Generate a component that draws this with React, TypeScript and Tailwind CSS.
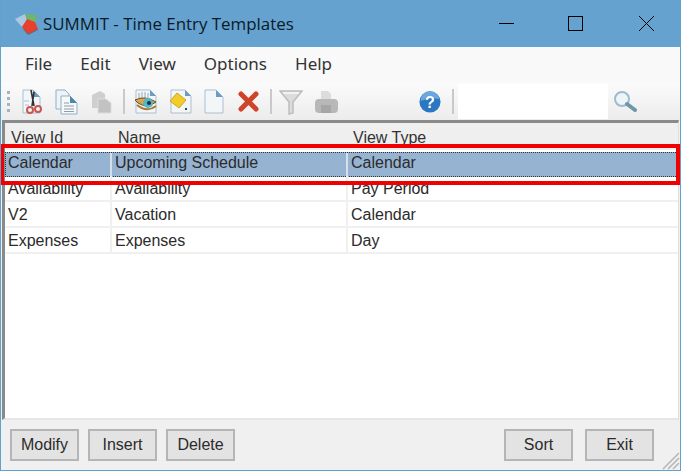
const font = "font-['Liberation_Sans',sans-serif]";

const rows = [
  { id: "Calendar", name: "Upcoming Schedule", type: "Calendar", selected: true },
  { id: "Availability", name: "Availability", type: "Pay Period" },
  { id: "V2", name: "Vacation", type: "Calendar" },
  { id: "Expenses", name: "Expenses", type: "Day" },
];

function Logo() {
  return (
    <svg width="24" height="24" viewBox="0 0 24 24" className="blur-[0.4px]">
      <path d="M9 17 L14 23 L24 18 L22 14 Z" fill="#4d6f8c" />
      <path d="M1 7 L11 2 L13 8 L8 15 Z" fill="#a9cbe2" />
      <path d="M11 2 L23 3 L21 11 L13 8 Z" fill="#6fb56a" />
      <path d="M8 15 L13 7 L21 10 L24 17 L14 22 Z" fill="#e8402f" />
    </svg>
  );
}

function PageBase({ w, fold = 7 }: { w: number; fold?: number }) {
  return (
    <>
      <path d={`M1 1 H${w - fold - 1} L${w - 1} ${fold + 1} V24 H1 Z`} fill="#f3f6f9" stroke="#a9c0d2" />
      <path d={`M${w - fold - 1} 1 V${fold + 1} H${w - 1} Z`} fill="#6d9cc0" />
    </>
  );
}

function Cut() {
  return (
    <svg width="21" height="26" viewBox="0 0 21 26" className="blur-[0.4px]">
      <PageBase w={19} />
      <path d="M2 12 H7 M3 16 H7" stroke="#a9c0d2" />
      <path d="M9 1 L12 17 M12 3 L10 17" stroke="#333" strokeWidth="1.6" />
      <circle cx="8" cy="21" r="3" fill="#f3f6f9" stroke="#c9574f" strokeWidth="2" />
      <circle cx="16" cy="20" r="3" fill="#f3f6f9" stroke="#c9574f" strokeWidth="2" />
    </svg>
  );
}

function Copy() {
  return (
    <svg width="23" height="26" viewBox="0 0 23 26" className="blur-[0.4px]">
      <path d="M1 1 H10 L14 5 V20 H1 Z" fill="#eef3f7" stroke="#8fb0c8" />
      <path d="M6 7 H15 L22 14 V25 H6 Z" fill="#f6f8fa" stroke="#8fb0c8" />
      <path d="M15 7 V14 H22 Z" fill="#4f86b0" />
      <path d="M9 14 H14 M9 17 H19 M9 20 H19 M9 22.5 H19" stroke="#8f9ea9" />
    </svg>
  );
}

function Paste() {
  return (
    <svg width="22" height="24" viewBox="0 0 22 24" className="blur-[0.6px]">
      <path d="M2 5 L10 1 L15 4 V18 H2 Z" fill="#cfcfcf" />
      <path d="M8 9 H16 L21 13 V23 H8 Z" fill="#c2c2c2" stroke="#dcdcdc" />
    </svg>
  );
}

function Preview() {
  return (
    <svg width="22" height="26" viewBox="0 0 22 26" className="blur-[0.4px]">
      <PageBase w={22} fold={6} />
      <path d="M4 4 V9 M7 3 V9 M10 3 V9 M13 4 V9" stroke="#98a6b0" />
      <path d="M0 11 Q10 6 21 13 Q12 20 3 14 Z" fill="#d6a653" stroke="#6d4a1c" />
      <ellipse cx="13" cy="14" rx="5" ry="5" fill="#58b5c4" />
      <circle cx="14" cy="14" r="2" fill="#12363d" />
      <path d="M2 16 Q12 24 21 17" fill="none" stroke="#a77a35" strokeWidth="2" />
    </svg>
  );
}

function Edit() {
  return (
    <svg width="22" height="26" viewBox="0 0 22 26" className="blur-[0.4px]">
      <PageBase w={22} fold={6} />
      <path d="M0 12 L7 4 L16 11 L9 19 Z" fill="#f2cc2a" stroke="#cda71d" />
      <rect x="15" y="19" width="2" height="2" fill="#444" />
    </svg>
  );
}

function Page() {
  return (
    <svg width="20" height="26" viewBox="0 0 20 26" className="blur-[0.4px]">
      <PageBase w={20} />
    </svg>
  );
}

function RedX() {
  return (
    <svg width="21" height="21" viewBox="0 0 21 21" className="blur-[0.3px]">
      <path d="M3 3 L18 18 M18 3 L3 18" stroke="#cf4429" strokeWidth="5" strokeLinecap="round" />
    </svg>
  );
}

function Funnel() {
  return (
    <svg width="24" height="26" viewBox="0 0 24 26" className="blur-[0.4px]">
      <path d="M1 2 H23 L14 13 V24 L10 25 V13 Z" fill="#dcdcdc" stroke="#bdbdbd" strokeWidth="1.5" />
      <path d="M4 4 H20" stroke="#f2f2f2" strokeWidth="2" />
    </svg>
  );
}

function Printer() {
  return (
    <svg width="24" height="24" viewBox="0 0 24 24" className="blur-[0.5px]">
      <path d="M7 1 H14 L17 4 V10 H7 Z" fill="#dcdcdc" />
      <rect x="1" y="9" width="23" height="14" rx="4" fill="#b8b8b8" />
      <rect x="7" y="15" width="10" height="8" fill="#a6a6a6" />
    </svg>
  );
}

function Help() {
  return (
    <svg width="22" height="22" viewBox="0 0 24 24" className="blur-[0.3px]">
      <circle cx="12" cy="12" r="11.5" fill="#2b78c2" />
      <path d="M2 11 A10 10 0 0 1 22 9 Q12 6 2 11 Z" fill="#6ba6dc" />
      <text x="12" y="18.5" textAnchor="middle" fontSize="18" fontWeight="700" fill="#fff" fontFamily="Liberation Sans">?</text>
    </svg>
  );
}

function Search() {
  return (
    <svg width="25" height="24" viewBox="0 0 25 24" className="blur-[0.3px]">
      <circle cx="9" cy="9" r="7" fill="#eef5f8" stroke="#9cbccc" strokeWidth="2" />
      <path d="M14 14 L22 20" stroke="#6f97a8" strokeWidth="4" strokeLinecap="round" />
    </svg>
  );
}

function Sep() {
  return <div className="h-[25px] w-[2px] bg-[#c9c9c9]" />;
}

function Btn({ label }: { label: string }) {
  return (
    <button className="flex h-[32px] w-[69px] items-center justify-center border-2 border-[#b5b5b5] bg-[#e3e3e3] text-[16px] text-[#2b2b2b]">
      {label}
    </button>
  );
}

export default function App() {
  return (
    <div className={`${font} relative flex h-[471px] w-[681px] flex-col overflow-hidden border-x border-b border-[#62a0d0] bg-[#f0f0f0]`}>
      {/* title bar */}
      <div className="flex h-[47px] shrink-0 items-center bg-[#65a2d0] pl-[13px] font-['Open_Sans',sans-serif] text-[#0b1a26]">
        <Logo />
        <span className="ml-[5px] text-[16.9px]">SUMMIT - Time Entry Templates</span>
        <div className="ml-auto mr-[26px] flex items-center">
          <svg width="15" height="15" viewBox="0 0 15 15">
            <path d="M0 7.5 H15" stroke="#000" />
          </svg>
          <svg width="15" height="15" viewBox="0 0 15 15" className="ml-[54px]">
            <rect x="0.5" y="0.5" width="14" height="14" fill="none" stroke="#000" />
          </svg>
          <svg width="15" height="15" viewBox="0 0 15 15" className="ml-[56px]">
            <path d="M0 0 L15 15 M15 0 L0 15" stroke="#000" />
          </svg>
        </div>
      </div>

      {/* menu */}
      <div className="flex h-[36px] shrink-0 items-center gap-[28px] bg-[#f9f9f9] pb-[2px] pl-[24px] font-['Noto_Sans',sans-serif] text-[17px] text-[#333]">
        <span>File</span>
        <span>Edit</span>
        <span>View</span>
        <span>Options</span>
        <span>Help</span>
      </div>

      {/* toolbar */}
      <div className="flex h-[37px] shrink-0 items-center bg-gradient-to-b from-[#fbfbfb] to-[#ececec] pl-[6px]">
        <div className="mr-[12px] flex flex-col gap-[3px]">
          <div className="size-[3px] bg-[#a9b3bb]" />
          <div className="size-[3px] bg-[#a9b3bb]" />
          <div className="size-[3px] bg-[#a9b3bb]" />
          <div className="size-[3px] bg-[#a9b3bb]" />
        </div>
        <Cut />
        <div className="ml-[12px]"><Copy /></div>
        <div className="ml-[12px]"><Paste /></div>
        <div className="ml-[11px]"><Sep /></div>
        <div className="ml-[10px]"><Preview /></div>
        <div className="ml-[13px]"><Edit /></div>
        <div className="ml-[12px]"><Page /></div>
        <div className="ml-[14px]"><RedX /></div>
        <div className="ml-[11px]"><Sep /></div>
        <div className="ml-[7px]"><Funnel /></div>
        <div className="ml-[11px]"><Printer /></div>
        <div className="ml-[81px]"><Help /></div>
        <div className="ml-[11px]"><Sep /></div>
        <div className="ml-[4px] h-[35px] w-[150px] bg-white" />
        <div className="ml-[5px]"><Search /></div>
      </div>

      {/* grid */}
      <div className="ml-[1px] mr-[1px] flex min-h-0 flex-1 flex-col border-b-[2px] border-l-[3px] border-r-[1px] border-t-[3px] border-b-[#e6e6e6] border-l-[#8a8a8a] border-r-[#e0e0e0] border-t-[#8a8a8a] bg-white text-[16px] text-[#2b2b2b]">
        <div className="grid h-[27px] shrink-0 grid-cols-[105px_236px_1fr] items-center bg-[#efefef] pt-[2px] text-[#333]">
          <span className="pl-[6px]">View Id</span>
          <span className="pl-[8px]">Name</span>
          <span className="pl-[7px]">View Type</span>
        </div>
        <div>
          {rows.map((row) =>
            row.selected ? (
              <div key={row.id} className="-mb-[1px] h-[27px] pt-[2px]">
                <div className="grid h-[25px] grid-cols-[104px_236px_1fr] border border-dotted border-[#333] bg-[#97b3d2] leading-[19px]">
                  <span className="pl-[2px]">{row.id}</span>
                  <span className="border-l-2 border-[#d5e0ea] pl-[3px]">{row.name}</span>
                  <span className="border-l-2 border-[#d5e0ea] pl-[3px]">{row.type}</span>
                </div>
              </div>
            ) : (
              <div key={row.id} className="grid h-[26px] grid-cols-[105px_236px_1fr] border-b-2 border-[#f0f0f0] leading-[26px]">
                <span className="pl-[3px]">{row.id}</span>
                <span className="border-l-2 border-[#f0f0f0] pl-[3px]">{row.name}</span>
                <span className="border-l-2 border-[#f0f0f0] pl-[3px]">{row.type}</span>
              </div>
            ),
          )}
        </div>
      </div>

      {/* buttons */}
      <div className="flex h-[50px] shrink-0 items-center pl-[9px] pr-[26px]">
        <div className="flex gap-[9px]">
          <Btn label="Modify" />
          <Btn label="Insert" />
          <Btn label="Delete" />
        </div>
        <div className="ml-auto flex gap-[12px]">
          <Btn label="Sort" />
          <Btn label="Exit" />
        </div>
      </div>

      {/* size grip */}
      <svg className="absolute bottom-0 right-0" width="20" height="20" viewBox="0 0 20 20">
        <path d="M3 19 L19 3 M8 19 L19 8 M13 19 L19 13" stroke="#b5b5b5" strokeWidth="1.5" />
      </svg>

      {/* red highlight */}
      <div className="absolute left-[-1px] top-[144px] h-[41px] w-[680px] border-[4px] border-[#f00000]" />
    </div>
  );
}
